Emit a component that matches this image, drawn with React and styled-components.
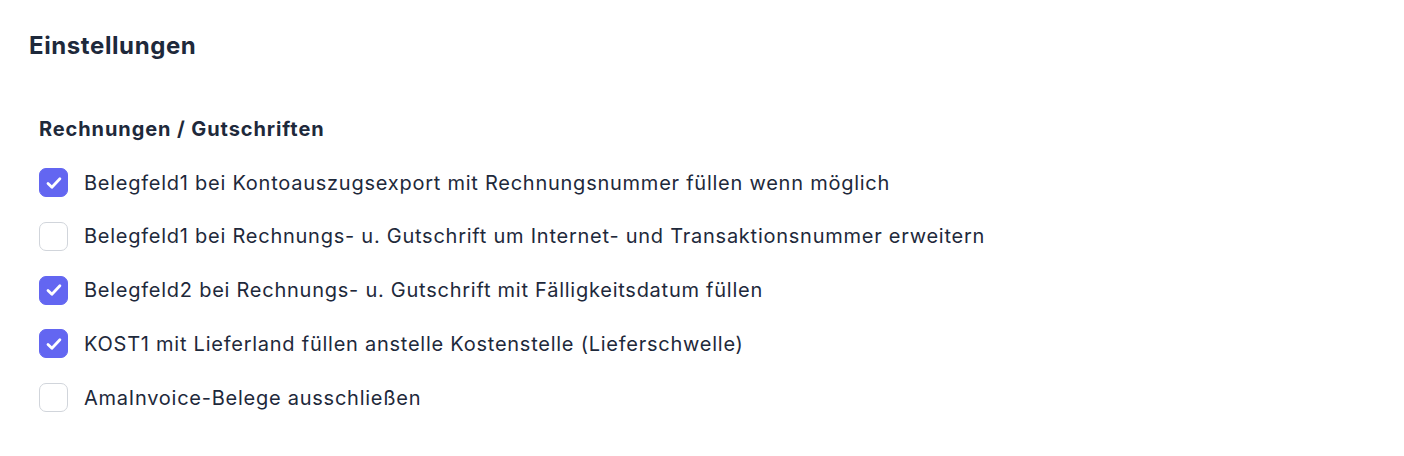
import React from 'react';
import styled, { createGlobalStyle } from 'styled-components';

const GlobalStyle = createGlobalStyle`
  body {
    margin: 0;
    background: #ffffff;
    font-family: Inter, "Liberation Sans", sans-serif;
    color: #1e293b;
  }
`;

const Page = styled.div`
  padding: 30px 29px;
`;

const Title = styled.h1`
  margin: 0;
  font-size: 24px;
  font-weight: 700;
  line-height: 32px;
  letter-spacing: 0.6px;
  color: #1e293b;
`;

const Section = styled.section`
  margin: 53px 0 0 10px;
`;

const SectionTitle = styled.h2`
  margin: 0 0 25px;
  font-size: 20px;
  font-weight: 700;
  line-height: 28px;
  letter-spacing: 0.9px;
  color: #1e293b;
`;

const List = styled.div`
  display: flex;
  flex-direction: column;
  gap: 24.8px;
`;

const Row = styled.label`
  display: flex;
  align-items: center;
  gap: 16px;
  cursor: pointer;
`;

const Box = styled.span`
  flex: none;
  display: flex;
  align-items: center;
  justify-content: center;
  width: 29px;
  height: 29px;
  box-sizing: border-box;
  border-radius: 7px;
  border: 1px solid ${(p) => (p.$checked ? '#6366f1' : '#d1d5db')};
  background: ${(p) => (p.$checked ? '#6366f1' : '#ffffff')};
`;

const Label = styled.span`
  font-size: 20px;
  line-height: 28px;
  letter-spacing: 0.75px;
  color: #1e293b;
`;

const Check = () => (
  <svg width="20" height="20" viewBox="0 0 20 20" fill="none">
    <path d="M4 10.4l3.9 3.8 8-8.4" stroke="#fff" strokeWidth="2.8" strokeLinecap="round" strokeLinejoin="round" />
  </svg>
);

const options = [
  { text: 'Belegfeld1 bei Kontoauszugsexport mit Rechnungsnummer füllen wenn möglich', checked: true },
  { text: 'Belegfeld1 bei Rechnungs- u. Gutschrift um Internet- und Transaktionsnummer erweitern', checked: false },
  { text: 'Belegfeld2 bei Rechnungs- u. Gutschrift mit Fälligkeitsdatum füllen', checked: true },
  { text: 'KOST1 mit Lieferland füllen anstelle Kostenstelle (Lieferschwelle)', checked: true },
  { text: 'AmaInvoice-Belege ausschließen', checked: false },
];

export default function App() {
  return (
    <>
      <GlobalStyle />
      <Page>
        <Title>Einstellungen</Title>
        <Section>
          <SectionTitle>Rechnungen / Gutschriften</SectionTitle>
          <List>
            {options.map((o) => (
              <Row key={o.text}>
                <Box $checked={o.checked}>{o.checked && <Check />}</Box>
                <Label>{o.text}</Label>
              </Row>
            ))}
          </List>
        </Section>
      </Page>
    </>
  );
}
